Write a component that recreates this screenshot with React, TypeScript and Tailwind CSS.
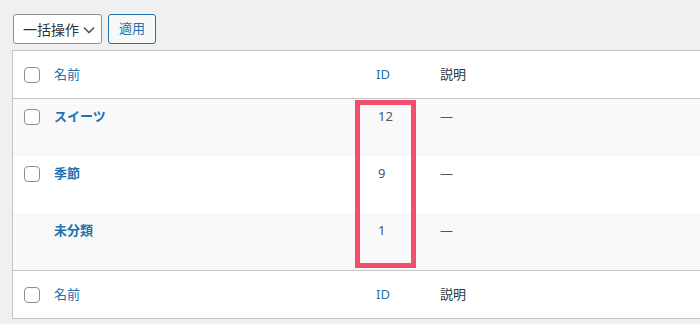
import React from "react";

const font = { fontFamily: '"Noto Sans", "Noto Sans CJK JP", sans-serif' };

function Checkbox() {
  return <span className="block h-4 w-4 rounded-[4px] border border-[#8c8f94] bg-white" />;
}

export default function App() {
  const rows = [
    { name: "スイーツ", id: "12", check: true },
    { name: "季節", id: "9", check: true },
    { name: "未分類", id: "1", check: false },
  ];

  const head = (
    <div className="grid h-[47px] grid-cols-[31px_322px_64px_1fr] items-center text-[13px]">
      <div className="pl-[11px]">
        <Checkbox />
      </div>
      <div className="pl-[10px] text-[#2271b1]">名前</div>
      <div className="pl-[10px] text-[#2271b1]">ID</div>
      <div className="pl-[10px] text-[#2c3338]">説明</div>
    </div>
  );

  return (
    <div className="h-[324px] w-[700px] overflow-hidden bg-[#f0f0f1]" style={font}>
      <div className="flex gap-[6px] pl-[13px] pt-[14px]">
        <div className="flex h-[30px] w-[89px] items-center justify-between rounded-[3px] border border-[#8c8f94] bg-white pl-[9px] pr-[6px] text-[14px] text-[#2c3338]">
          <span>一括操作</span>
          <svg width="12" height="8" viewBox="0 0 12 8" className="mt-[1px]">
            <path d="M1 1.5l5 5 5-5" fill="none" stroke="#50575e" strokeWidth="1.6" />
          </svg>
        </div>
        <button className="flex h-[30px] w-[48px] items-center justify-center rounded-[3px] border border-[#2271b1] bg-[#f6f7f7] text-[13px] text-[#2271b1]">
          適用
        </button>
      </div>

      <div className="relative ml-[12px] mt-[6px] w-[720px] border border-[#c3c4c7] bg-white">
        <div className="border-b border-[#c3c4c7]">{head}</div>
        {rows.map((r, i) => (
          <div
            key={r.id}
            className={`grid h-[57px] grid-cols-[31px_322px_64px_1fr] text-[13px] ${i % 2 === 0 ? "bg-[#f9f9f9]" : "bg-white"}`}
          >
            <div className="pl-[11px] pt-[10px]">{r.check && <Checkbox />}</div>
            <div className="pl-[10px] pt-[8px] font-semibold leading-[18px] text-[#2271b1]">{r.name}</div>
            <div className="pl-[12px] pt-[8px] leading-[18px] text-[#50575e]">{r.id}</div>
            <div className="pl-[10px] pt-[8px] leading-[18px] text-[#50575e]">—</div>
          </div>
        ))}
        <div className="border-t border-[#c3c4c7]">{head}</div>

        <div className="absolute left-[342px] top-[49px] h-[168px] w-[61px] border-[5px] border-[#f54d6d]" />
      </div>
    </div>
  );
}
